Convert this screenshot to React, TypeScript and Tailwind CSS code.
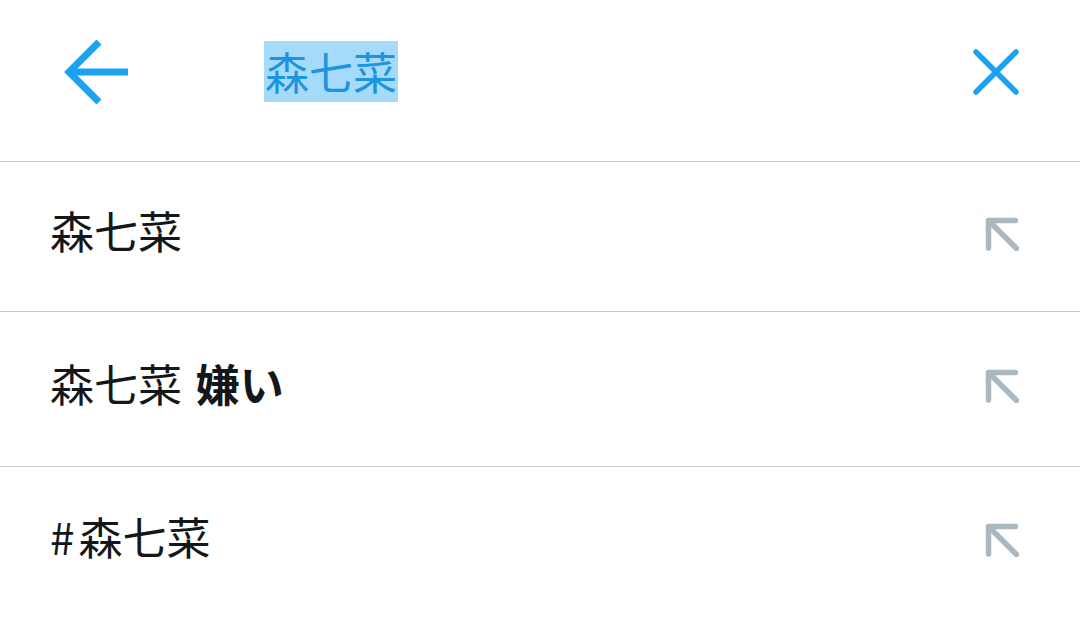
import React from 'react'

const font = { fontFamily: '"Noto Sans CJK JP", "Noto Sans", sans-serif' }

function UpLeftArrow() {
  return (
    <svg width="34" height="34" viewBox="0 0 34 34" fill="none" stroke="#aab8c2" strokeWidth="5.5" strokeLinecap="round" strokeLinejoin="round">
      <path d="M3.5 31V3.5h27" />
      <path d="M4 4l27.5 27.5" />
    </svg>
  )
}

function Row({ children, h }: { children: React.ReactNode; h: string }) {
  return (
    <div className={`flex items-center justify-between border-b border-[#c4cdd3] pl-[50px] pr-[61px] ${h}`}>
      <div className="mb-[13px] text-[44px] leading-none text-[#14171a]">{children}</div>
      <div className="mb-[6px]">
        <UpLeftArrow />
      </div>
    </div>
  )
}

export default function App() {
  return (
    <div className="w-[1080px] h-[618px] overflow-hidden bg-white" style={font}>
      <div className="flex items-center h-[162px] border-b border-[#c4cdd3] pb-[18px]">
        <div className="ml-[63px] w-[67px] flex items-center">
          <svg width="67" height="66" viewBox="0 0 67 66" fill="none" stroke="#1da1f2" strokeWidth="7">
            <path d="M36 3L6 33l30 30" />
            <path d="M6 33h59" />
          </svg>
        </div>
        <div className="ml-[134px] flex-1">
          <span className="inline-block h-[61px] leading-[61px] px-[1px] bg-[#a6dafa] text-[44px] text-[#1b95e0]">森七菜</span>
        </div>
        <div className="mr-[61px]">
          <svg width="46" height="46" viewBox="0 0 46 46" fill="none" stroke="#1da1f2" strokeWidth="5.5" strokeLinecap="round">
            <path d="M3 3l40 40M43 3L3 43" />
          </svg>
        </div>
      </div>
      <Row h="h-[150px]">森七菜</Row>
      <Row h="h-[155px]">
        森七菜 <span className="ml-[4px] font-bold">嫌い</span>
      </Row>
      <Row h="h-[152px]">
        <span className="mr-[4px]">#</span>森七菜
      </Row>
    </div>
  )
}
